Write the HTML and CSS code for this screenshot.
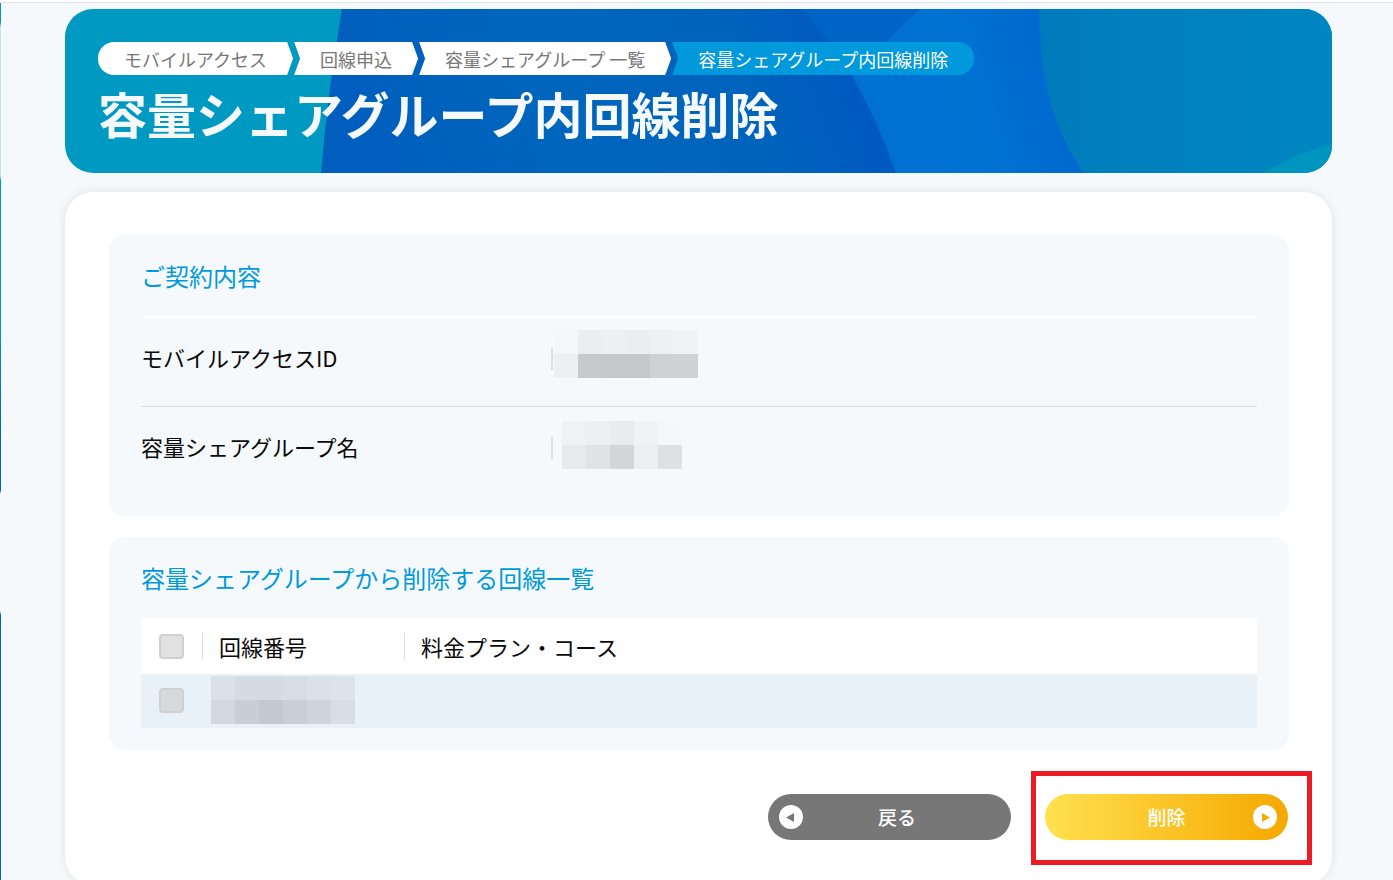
FILE: index.html
```html
<!DOCTYPE html>
<html lang="ja">
<head>
<meta charset="utf-8">
<meta name="viewport" content="width=device-width, initial-scale=1">
<title>容量シェアグループ内回線削除</title>
<link rel="stylesheet" href="styles.css">
</head>
<body>
<div class="page">
  <header class="banner">
    <svg class="banner-art" viewBox="0 0 1267 164" preserveAspectRatio="none" aria-hidden="true">
      <defs>
        <linearGradient id="deep" gradientUnits="userSpaceOnUse" x1="300" y1="100" x2="820" y2="-80">
          <stop offset="0" stop-color="#005fbe"/>
          <stop offset=".3" stop-color="#0065bc"/>
          <stop offset=".65" stop-color="#0064bc"/>
          <stop offset=".85" stop-color="#005ac0"/>
        </linearGradient>
        <linearGradient id="bright" gradientUnits="userSpaceOnUse" x1="780" y1="120" x2="985" y2="60">
          <stop offset="0" stop-color="#0070d2"/>
          <stop offset=".6" stop-color="#0072d2"/>
          <stop offset="1" stop-color="#0069cf"/>
        </linearGradient>
        <linearGradient id="sea" x1="0" y1="0" x2="1" y2="0">
          <stop offset="0" stop-color="#007abc"/>
          <stop offset=".3" stop-color="#0080be"/>
          <stop offset="1" stop-color="#0086c0"/>
        </linearGradient>
      </defs>
      <rect width="1267" height="164" fill="#0099c2"/>
      <path d="M277 0H900V164H256Q263 80 277 0Z" fill="url(#deep)"/>
      <path d="M738 0Q798 70 831 164H1100V0Z" fill="#0064c6"/>
      <path d="M855 0L787 66Q813 110 831 164H1100V0Z" fill="url(#bright)"/>
      <path d="M974 0C975 70 985 112 1018 164H1267V0Z" fill="url(#sea)"/>
      <path d="M1198 164Q1226 146 1267 135V164Z" fill="#0095bf"/>
    </svg>
    <nav aria-label="パンくずリスト">
      <ol class="crumbs">
        <li class="crumb crumb-first"><a href="#">モバイルアクセス</a></li>
        <li class="crumb crumb-mid"><a href="#">回線申込</a></li>
        <li class="crumb crumb-mid"><a href="#">容量シェアグループ 一覧</a></li>
        <li class="crumb crumb-current" aria-current="page">容量シェアグループ内回線削除</li>
      </ol>
    </nav>
    <h1 class="title">容量シェアグループ内回線削除</h1>
  </header>

  <main class="card">
    <section class="panel contract">
      <h2 class="heading">ご契約内容</h2>
      <dl class="details">
        <div class="detail">
          <dt>モバイルアクセスID</dt>
          <dd>
            <svg class="mask mask-id" width="144" height="48" shape-rendering="crispEdges" role="img" aria-label="非表示">
              <rect width="24" height="24" fill="#f3f7fa"/><rect x="24" width="24" height="24" fill="#eaeef1"/><rect x="48" width="24" height="24" fill="#ecf0f3"/><rect x="72" width="24" height="24" fill="#eaeef1"/><rect x="96" width="24" height="24" fill="#edf1f4"/><rect x="120" width="24" height="24" fill="#eff3f6"/>
              <rect y="24" width="24" height="24" fill="#ecf0f3"/><rect x="24" y="24" width="24" height="24" fill="#c6cacd"/><rect x="48" y="24" width="48" height="24" fill="#c4c8cb"/><rect x="96" y="24" width="48" height="24" fill="#ced2d5"/>
            </svg>
          </dd>
        </div>
        <div class="detail">
          <dt>容量シェアグループ名</dt>
          <dd>
            <svg class="mask mask-name" width="120" height="48" shape-rendering="crispEdges" role="img" aria-label="非表示">
              <rect width="24" height="24" fill="#eef2f5"/><rect x="24" width="24" height="24" fill="#ecf0f3"/><rect x="48" width="24" height="24" fill="#e8ecef"/><rect x="72" width="24" height="24" fill="#eff3f6"/><rect x="96" width="24" height="24" fill="#f4f8fb"/>
              <rect y="24" width="24" height="24" fill="#e6eaed"/><rect x="24" y="24" width="24" height="24" fill="#dfe3e6"/><rect x="48" y="24" width="24" height="24" fill="#d2d6d9"/><rect x="72" y="24" width="24" height="24" fill="#ebeff2"/><rect x="96" y="24" width="24" height="24" fill="#dde1e4"/>
            </svg>
          </dd>
        </div>
      </dl>
    </section>

    <section class="panel lines">
      <h2 class="heading">容量シェアグループから削除する回線一覧</h2>
      <table class="table">
        <thead>
          <tr>
            <th class="col-check"><input class="check" type="checkbox" aria-label="すべて選択"></th>
            <th class="col-number"><span class="label">回線番号</span></th>
            <th><span class="label">料金プラン・コース</span></th>
          </tr>
        </thead>
        <tbody>
          <tr>
            <td class="col-check"><input class="check" type="checkbox" aria-label="回線を選択"></td>
            <td class="col-number">
              <svg class="mask mask-line" width="144" height="48" shape-rendering="crispEdges" role="img" aria-label="非表示">
                <rect width="24" height="24" fill="#dae1e8"/><rect x="24" width="48" height="24" fill="#d4dbe2"/><rect x="72" width="24" height="24" fill="#d6dde4"/><rect x="96" width="24" height="24" fill="#dae1e8"/><rect x="120" width="24" height="24" fill="#dce3ea"/>
                <rect y="24" width="24" height="24" fill="#d1d8df"/><rect x="24" y="24" width="24" height="24" fill="#c7ced5"/><rect x="48" y="24" width="24" height="24" fill="#c2c9d0"/><rect x="72" y="24" width="24" height="24" fill="#c8cfd6"/><rect x="96" y="24" width="24" height="24" fill="#cdd4db"/><rect x="120" y="24" width="24" height="24" fill="#d7dee5"/>
              </svg>
            </td>
            <td></td>
          </tr>
        </tbody>
      </table>
    </section>

    <div class="actions">
      <button class="button back" type="button">
        <svg class="arrow" viewBox="0 0 24 24" aria-hidden="true"><circle cx="12" cy="12" r="12" fill="#fff"/><path d="M15 8V17L7 12.500Z" fill="#777"/></svg>
        戻る
      </button>
      <div class="focus">
        <button class="button delete" type="button">
          <svg class="arrow" viewBox="0 0 24 24" aria-hidden="true"><circle cx="12" cy="12" r="12" fill="#fff"/><path d="M9 8V17L17 12.500Z" fill="#f7ad05"/></svg>
          削除
        </button>
      </div>
    </div>
  </main>
</div>
</body>
</html>
```
FILE: styles.css
```css
* {
  box-sizing: border-box;
}

body {
  margin: 0;
  min-height: 100vh;
  font-family: "Noto Sans CJK JP", "Noto Sans", sans-serif;
  font-size: 22px;
  color: #0a0a0a;
  background-color: #f5f9fc;
  /* edge of the side menu */
  background-image: linear-gradient(#0099c2 22px, #c3e4ef 27px, #c3e4ef 176px, #0099c2 181px, #0099c2 330px, #0064bd 440px, #0064bd 490px, #f5f9fc 494px, #f5f9fc 611px, #0064bd 615px);
  background-size: 1px 100%;
  background-repeat: no-repeat;
}

.page {
  padding: 6px 61px 0 65px;
}

body::before {
  content: "";
  display: block;
  height: 2px;
  background: #fff;
  border-bottom: 1px solid #e2e5e8;
}

.banner {
  position: relative;
  overflow: hidden;
  padding: 33px 33px 28px;
  border-radius: 28px;
}

.banner-art {
  position: absolute;
  inset: 0;
  width: 100%;
  height: 100%;
}

.crumbs {
  position: relative;
  display: flex;
  gap: 1px;
  margin: 0;
  padding: 0;
  list-style: none;
  font-size: 18px;
}

.crumb {
  padding: 0 26px;
  height: 33px;
  line-height: 35px;
  background: #fff;
  color: #777;
  white-space: nowrap;
}

.crumb a {
  color: inherit;
  text-decoration: none;
}

.crumb-first {
  border-radius: 16px 0 0 16px;
  clip-path: polygon(0 0, calc(100% - 6px) 0, 100% 50%, calc(100% - 6px) 100%, 0 100%);
}

.crumb-mid {
  clip-path: polygon(0 0, calc(100% - 6px) 0, 100% 50%, calc(100% - 6px) 100%, 0 100%, 6px 50%);
}

.crumb-current {
  border-radius: 0 16px 16px 0;
  background: #0099dc;
  color: #fff;
  clip-path: polygon(0 0, 100% 0, 100% 100%, 0 100%, 6px 50%);
}

.title {
  position: relative;
  margin: 0;
  padding-top: 6px;
  font-size: 49px;
  font-weight: 700;
  line-height: 64px;
  color: #f5f9fc;
}

.card {
  margin-top: 19px;
  padding: 43px 43px 45px 44px;
  border-radius: 28px;
  background: #fff;
  box-shadow: 0 0 8px rgba(60, 60, 60, .12);
}

.panel {
  padding: 24px 32px 21px;
  border-radius: 16px;
  background: #f5f9fc;
}

.lines {
  margin-top: 21px;
  padding-bottom: 22px;
}

.heading {
  margin: 0;
  font-size: 24px;
  font-weight: 400;
  line-height: 34px;
  color: #0099dc;
}

.contract .heading {
  padding-bottom: 23px;
  border-bottom: 2px solid #fff;
}

.details {
  margin: 0;
}

.detail {
  display: grid;
  grid-template-columns: 410px 1fr;
  min-height: 88px;
  padding-top: 12px;
}

.detail + .detail {
  min-height: 89px;
  border-top: 1px solid #d9dde0;
}

dt {
  line-height: 55px;
}

dd {
  display: flex;
  margin: 0;
}

dd::before {
  content: "";
  width: 2px;
  height: 22px;
  margin-top: 18px;
  background: #dcdee0;
}

.mask {
  display: block;
}

.mask-id {
  margin-left: 1px;
}

.mask-name {
  margin: 2px 0 0 9px;
}

.table {
  width: 100%;
  margin-top: 23px;
  border-collapse: collapse;
  table-layout: fixed;
  background: #fff;
}

th,
td {
  padding: 0;
  text-align: left;
  font-weight: 400;
}

thead tr {
  height: 56px;
}

tbody tr {
  height: 54px;
  background: #e8f0f8;
}

.col-check {
  width: 61px;
  padding-left: 18px;
}

tbody .col-check {
  padding-bottom: 2px;
}

.col-number {
  width: 202px;
}

.label {
  display: block;
  padding-left: 16px;
  border-left: 1px solid #dcdee0;
  line-height: 27px;
}

.mask-line {
  margin: 0 0 2px 9px;
}

.check {
  display: block;
  appearance: none;
  width: 25px;
  height: 25px;
  margin: 0;
  border: 2px solid #d0d0d0;
  border-radius: 4px;
  background: #e1e1e1;
}

tbody .check {
  background: #d7dadc;
}

.actions {
  display: flex;
  justify-content: flex-end;
  gap: 34px;
  padding: 44px 1px 0 0;
}

.button {
  position: relative;
  display: block;
  width: 243px;
  height: 46px;
  padding: 0 0 0 15px;
  border: 0;
  border-radius: 23px;
  font: 500 19px/46px "Noto Sans CJK JP", "Noto Sans", sans-serif;
  color: #fff;
}

.back {
  background: #777;
}

.delete {
  padding: 0;
  background: linear-gradient(90deg, #ffe14f, #f6a800);
}

.arrow {
  position: absolute;
  top: 11px;
  width: 24px;
  height: 24px;
}

.back .arrow {
  left: 11px;
}

.delete .arrow {
  right: 11px;
}

.focus {
  position: relative;
}

.focus::after {
  content: "";
  position: absolute;
  inset: -23px -24px -25px -14px;
  border: 5px solid #ed1c24;
  pointer-events: none;
}
```
